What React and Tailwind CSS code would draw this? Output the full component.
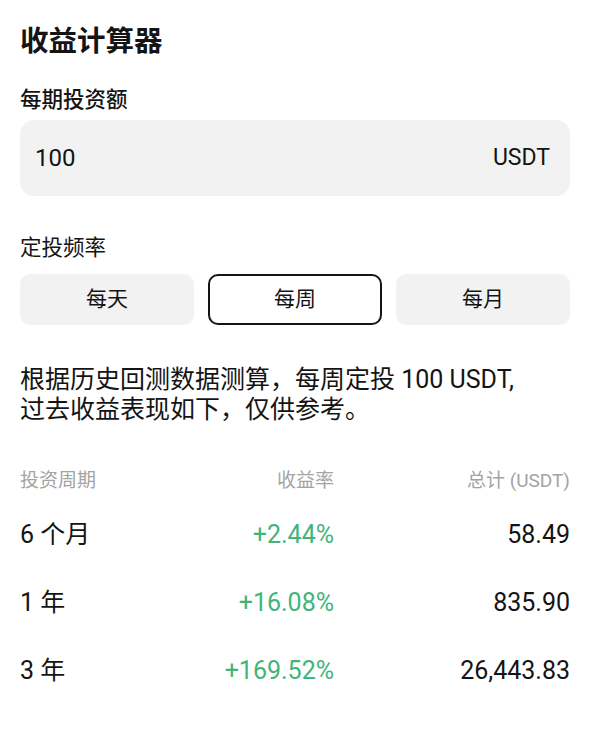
import React, { useState } from 'react'

const rows = [
  { period: '6 个月', rate: '+2.44%', total: '58.49' },
  { period: '1 年', rate: '+16.08%', total: '835.90' },
  { period: '3 年', rate: '+169.52%', total: '26,443.83' },
]

const freqs = ['每天', '每周', '每月']

export default function App() {
  const [freq, setFreq] = useState('每周')

  return (
    <div className="w-[589px] min-h-[740px] bg-white text-[#141414] pl-5 pr-[19px] pt-6 font-['Roboto','Noto_Sans_CJK_SC',sans-serif]">
      <h1 className="text-[28.5px] leading-[36px] font-bold">收益计算器</h1>

      {/* Amount input */}
      <div className="mt-[26px] text-[21.5px] leading-[28px] font-medium">每期投资额</div>
      <div className="mt-[6px] h-[76px] rounded-[14px] bg-[#f2f2f2] flex items-center justify-between pl-[15px] pr-[20px]">
        <span className="text-[24px]">100</span>
        <span className="text-[23px]">USDT</span>
      </div>

      {/* Frequency */}
      <div className="mt-[38px] text-[21.5px] leading-[28px]">定投频率</div>
      <div className="mt-3 grid grid-cols-3 gap-[14px]">
        {freqs.map((f) => (
          <button
            key={f}
            type="button"
            onClick={() => setFreq(f)}
            className={`h-[51px] rounded-[10px] text-[21px] flex items-center justify-center ${
              freq === f ? 'border-2 border-[#141414] bg-white' : 'bg-[#f2f2f2] border-2 border-transparent'
            }`}
          >
            {f}
          </button>
        ))}
      </div>

      <p className="mt-10 text-[25px] leading-[30px]">
        根据历史回测数据测算，每周定投 100 USDT,
        <br />
        过去收益表现如下，仅供参考。
      </p>

      {/* Results table */}
      <div className="mt-[44px] grid grid-cols-[150px_164px_1fr] text-[19px] leading-[24px] text-[#a3a3a3]">
        <span>投资周期</span>
        <span className="text-right">收益率</span>
        <span className="text-right">总计 (USDT)</span>
      </div>
      <div className="mt-2">
        {rows.map((r) => (
          <div key={r.period} className="grid grid-cols-[150px_164px_1fr] h-[68px] items-center text-[25px]">
            <span>{r.period}</span>
            <span className="text-right text-[#3fb57a]">{r.rate}</span>
            <span className="text-right">{r.total}</span>
          </div>
        ))}
      </div>
    </div>
  )
}
